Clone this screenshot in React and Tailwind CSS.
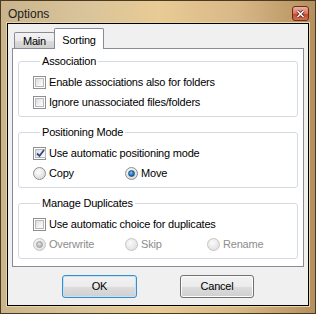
import React from 'react'

const font = { fontFamily: '"Liberation Sans", Arial, sans-serif' }

// Win7-style checkbox
const CheckBox = ({ checked }) => (
  <span className="w-[13px] h-[13px] shrink-0 border border-[#8f8f8f] bg-white p-px flex">
    <span className="flex-1 border border-[#b5b8bd] bg-[linear-gradient(135deg,#dcdcdc_0%,#f3f3f3_60%,#fbfbfb_100%)] flex items-center justify-center">
      {checked && (
        <svg width="9" height="9" viewBox="0 0 9 9">
          <path d="M1 4.5 L3.5 7 L8 1" fill="none" stroke="#2d4a87" strokeWidth="1.8" />
        </svg>
      )}
    </span>
  </span>
)

// Win7-style radio button
const Radio = ({ checked, disabled }) => (
  <span
    className={`w-[13px] h-[13px] shrink-0 rounded-full border flex items-center justify-center ${
      disabled
        ? 'border-[#c4c4c4] bg-[radial-gradient(circle_at_40%_35%,#fafafa_0%,#e4e4e4_70%,#d8d8d8_100%)]'
        : 'border-[#8e8f8f] bg-[radial-gradient(circle_at_40%_35%,#ffffff_0%,#dedede_70%,#cfcfcf_100%)]'
    }`}
  >
    {checked && (
      <span
        className={`w-[7px] h-[7px] rounded-full ${
          disabled
            ? 'bg-[radial-gradient(circle_at_40%_35%,#e0e0e0_0%,#a9a9a9_100%)] border border-[#9c9c9c]'
            : 'bg-[radial-gradient(circle_at_40%_35%,#7cc3f2_0%,#1f6fb5_60%,#1a4a7a_100%)] border border-[#1b4f86]'
        }`}
      />
    )}
  </span>
)

const Row = ({ children }) => <div className="h-[13px] flex items-center">{children}</div>

const Item = ({ control, label, disabled, className = '' }) => (
  <div className={`flex items-center gap-[3px] ${className}`}>
    {control}
    <span className={disabled ? 'text-[#8d8d8d]' : 'text-black'}>{label}</span>
  </div>
)

const Group = ({ title, children }) => (
  <fieldset className="border border-[#d5dbe0] rounded-[3px] pl-[14px] pr-2 pt-2 pb-[7px]">
    <legend className="ml-[7px] px-[2px] h-[13px] leading-[13px]">{title}</legend>
    <div className="flex flex-col gap-[7px]">{children}</div>
  </fieldset>
)

export default function App() {
  return (
    <div
      className="w-[316px] h-[314px] border border-[#4a3a22] bg-[linear-gradient(90deg,#c9b48c_0%,#d8c39a_25%,#e8cb95_50%,#d9b887_75%,#b4905e_100%)] flex flex-col text-[11px] tracking-[-0.2px] text-black"
      style={font}
    >
      {/* Title bar */}
      <div className="h-[22px] flex items-start justify-between pl-[7px] pr-[6px]">
        <span className="text-[12px] leading-[12px] mt-[7px] tracking-normal text-[#1b1b1b]">Options</span>
        <button className="mt-[5px] w-[17px] h-[15px] rounded-[3px] border border-[#6e2a1c] bg-[linear-gradient(180deg,#eab3a3_0%,#d9745c_50%,#c2432a_51%,#d2704f_100%)] flex items-center justify-center">
          <svg width="9" height="8" viewBox="0 0 9 8">
            <path d="M1.5 1 L7.5 7 M7.5 1 L1.5 7" stroke="#4a1a10" strokeWidth="3" />
            <path d="M1.5 1 L7.5 7 M7.5 1 L1.5 7" stroke="#ffffff" strokeWidth="1.6" />
          </svg>
        </button>
      </div>

      {/* Client area */}
      <div className="flex-1 mx-[6px] mb-[7px] border border-black shadow-[0_0_0_1px_#e9d4a4] bg-[#f0f0f0] flex flex-col px-[4px] pt-[4px] pr-[4px]">
        {/* Tabs */}
        <div className="flex items-end pl-[2px] h-[20px]">
          <div className="w-[41px] h-[16px] border border-b-0 border-[#898c95] rounded-t-[2px] bg-[linear-gradient(180deg,#f3f3f3_0%,#ebebeb_50%,#dddddd_51%,#cfcfcf_100%)] flex items-center justify-center pt-px">
            Main
          </div>
          <div className="-ml-px w-[50px] h-[21px] -mb-px relative z-10 border border-b-0 border-[#898c95] rounded-t-[2px] bg-white flex items-start justify-center pt-[3px]">
            Sorting
          </div>
        </div>

        {/* Tab page */}
        <div className="h-[219px] border border-[#898c95] bg-white px-[5px] pt-[6px] flex flex-col gap-[9px]">
          <Group title="Association">
            <Row>
              <Item control={<CheckBox />} label="Enable associations also for folders" />
            </Row>
            <Row>
              <Item control={<CheckBox />} label="Ignore unassociated files/folders" />
            </Row>
          </Group>

          <Group title="Positioning Mode">
            <Row>
              <Item control={<CheckBox checked />} label="Use automatic positioning mode" />
            </Row>
            <Row>
              <Item className="w-[92px]" control={<Radio />} label="Copy" />
              <Item control={<Radio checked />} label="Move" />
            </Row>
          </Group>

          <Group title="Manage Duplicates">
            <Row>
              <Item control={<CheckBox />} label="Use automatic choice for duplicates" />
            </Row>
            <Row>
              <Item className="w-[92px]" control={<Radio checked disabled />} label="Overwrite" disabled />
              <Item className="w-[82px]" control={<Radio disabled />} label="Skip" disabled />
              <Item control={<Radio disabled />} label="Rename" disabled />
            </Row>
          </Group>
        </div>

        {/* Buttons */}
        <div className="flex-1 flex items-center justify-center gap-[43px]">
          <button className="w-[75px] h-[23px] rounded-[3px] border border-[#3c8ccc] shadow-[inset_0_0_0_1px_#bfe4f8] bg-[linear-gradient(180deg,#f2f2f2_0%,#ebebeb_50%,#dddddd_51%,#cfcfcf_100%)] text-black">
            OK
          </button>
          <button className="w-[74px] h-[23px] rounded-[3px] border border-[#707070] shadow-[inset_0_0_0_1px_#fcfcfc] bg-[linear-gradient(180deg,#f2f2f2_0%,#ebebeb_50%,#dddddd_51%,#cfcfcf_100%)] text-black">
            Cancel
          </button>
        </div>
      </div>
    </div>
  )
}
